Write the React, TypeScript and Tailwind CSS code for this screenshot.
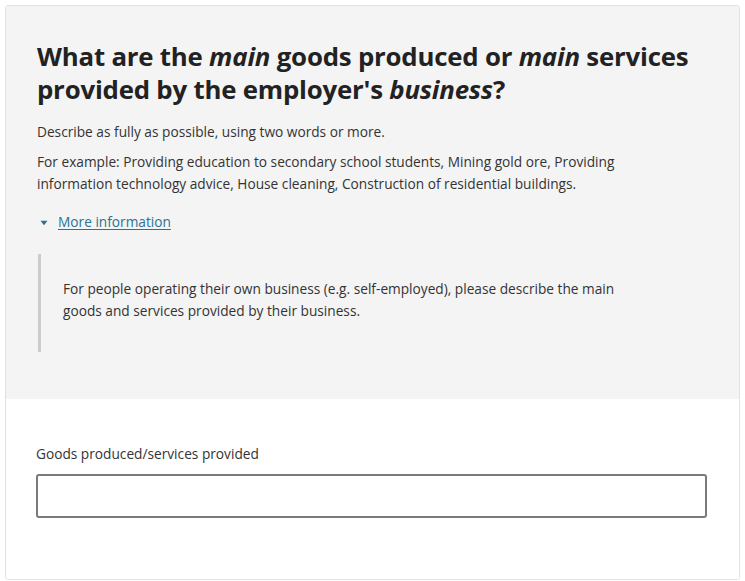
export default function App() {
  return (
    <div className="min-h-screen bg-white p-[5px] font-['Open_Sans',sans-serif]">
      <div className="w-[735px] overflow-hidden rounded-[3px] border border-[#e2e2e2]">
        <div className="h-[393px] bg-[#f4f4f4] pl-[31px] pr-[40px] pt-[34px]">
          <h1 className="text-[25.8px] font-bold leading-[33px] tracking-[-0.2px] text-[#222]">
            What are the <em>main</em> goods produced or <em>main</em> services provided by the
            employer's <em>business</em>?
          </h1>
          <p className="mt-[15px] text-[13.7px] leading-[22px] text-[#333]">
            Describe as fully as possible, using two words or more.
          </p>
          <p className="mt-[8px] max-w-[615px] text-[13.7px] leading-[22px] text-[#333]">
            For example: Providing education to secondary school students, Mining gold ore, Providing
            information technology advice, House cleaning, Construction of residential buildings.
          </p>
          <div className="mt-[16px] flex items-center gap-[10px] pl-[3px] text-[13.7px] leading-[22px]">
            <svg width="8" height="6" viewBox="0 0 8 6" className="mt-[1px]">
              <path d="M0.5 0.8 L7.5 0.8 L4 5.2 Z" fill="#2a7391" />
            </svg>
            <a href="#" className="text-[#2a7391] underline underline-offset-2">
              More information
            </a>
          </div>
          <div className="ml-[1px] mt-[21px] h-[98px] border-l-[3px] border-[#cccccc] pl-[22px] pt-[24px] text-[13.7px] leading-[22px] text-[#333]">
            <p className="max-w-[575px]">
              For people operating their own business (e.g. self-employed), please describe the main
              goods and services provided by their business.
            </p>
          </div>
        </div>
        <div className="h-[180px] bg-white px-[30px] pt-[44px]">
          <label className="block text-[13.7px] leading-[22px] text-[#333]">
            Goods produced/services provided
          </label>
          <input
            type="text"
            className="mt-[9px] block h-[44px] w-[671px] rounded-[3px] border-2 border-[#7a7a7a] bg-white px-2 outline-none"
          />
        </div>
      </div>
    </div>
  );
}
